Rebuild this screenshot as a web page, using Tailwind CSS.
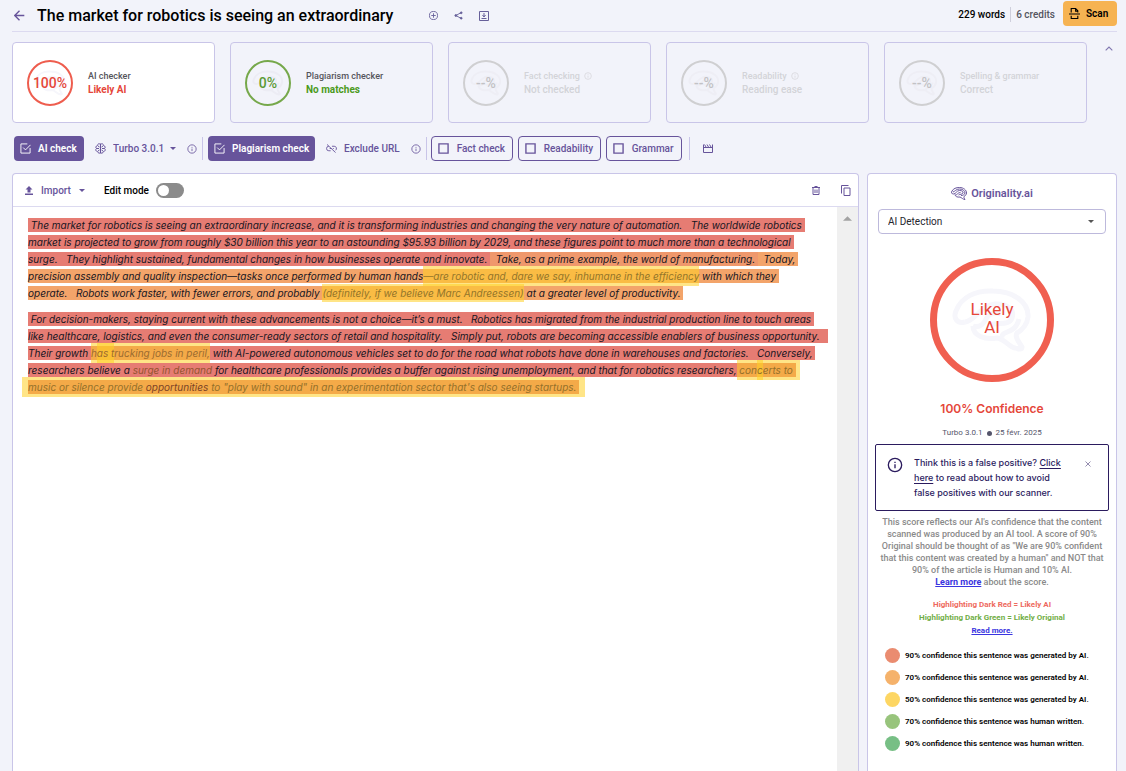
<!DOCTYPE html>
<html lang="en">
  <head>
    <meta charset="UTF-8" />
    <meta name="viewport" content="width=device-width, initial-scale=1.0" />
    <title>Originality.ai - Scan</title>
    <script src="https://cdn.jsdelivr.net/npm/@tailwindcss/browser@4"></script>
  </head>
  <body class="bg-[#f2f3fa] font-['Roboto',sans-serif] text-[10px] leading-[13px] text-black">
    <!-- Shared icons -->
    <svg class="hidden">
      <symbol id="brain" viewBox="0 0 80 66">
        <path d="M13 35C5 37 1 31 4 24C9 10 24 3 41 4C61 4 77 15 76 30C75 38 70 43 65 46C62 50 68 56 70 60C70 63 66 62 63 61C57 60 53 52 45 51C33 53 21 49 21 39" />
        <path d="M13 35C24 34 28 18 43 17C55 16 63 23 60 31C57 39 46 35 39 38M21 39C27 41 31 38 34 32C37 26 43 25 49 27M50 51C49 45 56 46 61 42C65 39 66 36 67 32" />
      </symbol>
      <symbol id="info" viewBox="0 0 24 24">
        <circle cx="12" cy="12" r="10" /><path d="M12 11v6M12 7v2" />
      </symbol>
      <symbol id="box" viewBox="0 0 24 24">
        <path d="M2 2h20v20H2z" />
      </symbol>
      <symbol id="box-checked" viewBox="0 0 24 24">
        <path d="M22 11v11H2V2h14M7 10l5 5L23 4" />
      </symbol>
    </svg>

    <div class="flex min-h-screen flex-col pl-3 pr-[9px]">
      <!-- Header -->
      <header class="flex h-8 items-center border-b border-[#dcdaf0]">
        <a href="#" aria-label="Back" class="mr-3 ml-0.5">
          <svg class="size-[11px] fill-none stroke-[#67549b] stroke-2" viewBox="0 0 16 16"><path d="M15 8H1M8 1L1 8l7 7" /></svg>
        </a>
        <h1 class="text-base leading-5 font-medium">The market for robotics is seeing an extraordinary</h1>
        <div class="ml-9 flex items-center gap-4 text-[#67609a]">
          <button aria-label="Add">
            <svg class="size-[9px] fill-none stroke-current stroke-2" viewBox="0 0 20 20"><circle cx="10" cy="10" r="9" /><path d="M10 5v10M5 10h10" /></svg>
          </button>
          <button aria-label="Share">
            <svg class="size-[9px] fill-current stroke-current stroke-2" viewBox="0 0 20 20"><path class="fill-none" d="M17 3L4 10l13 7" /><circle cx="16" cy="4" r="2" /><circle cx="4" cy="10" r="2" /><circle cx="16" cy="16" r="2" /></svg>
          </button>
          <button aria-label="Download">
            <svg class="size-[10px] fill-none stroke-current stroke-2" viewBox="0 0 20 20"><path d="M1 1h18v18H1zM5 15h10M10 4v7M7 8l3 4 3-4" /></svg>
          </button>
        </div>
        <div class="ml-auto flex h-full items-start">
          <p class="mt-2 font-medium">229 words</p>
          <div class="mx-[5px] mt-[7px] h-[15px] w-px bg-[#cfcfdc]"></div>
          <p class="mt-2 font-medium text-[#55555f]">6 credits</p>
          <button class="mt-px ml-2 flex h-[25px] w-[54px] items-center gap-1.5 rounded bg-[#f6b352] pl-1.5 font-semibold">
            <svg class="size-[11px] fill-none stroke-black stroke-2" viewBox="0 0 20 20"><path d="M4 8V1h8l4 4v3M12 1v5h4M0 11h20M4 14v5h12v-5" /></svg>
            Scan
          </button>
        </div>
      </header>

      <!-- Score cards -->
      <section class="mt-[10px] flex">
        <div class="grid flex-1 grid-cols-5 gap-[15px]">
          <article class="flex h-[81px] items-center gap-[15px] rounded border border-[#c9c5e8] bg-white pl-3.5">
            <div class="relative grid size-[46px] place-items-center rounded-full border-2 border-[#ee5d4e] text-sm font-medium text-[#e5473a]">
              <svg class="absolute h-[26px] w-8 fill-none stroke-[#f6f6fb] stroke-[5]"><use href="#brain" /></svg>
              <span class="relative">100%</span>
            </div>
            <div>
              <h2 class="text-[9px] font-medium text-[#55555c]">AI checker</h2>
              <p class="font-bold text-[#e5473a]">Likely AI</p>
            </div>
          </article>
          <article class="flex h-[81px] items-center gap-[15px] rounded border border-[#c9c5e8] pl-3.5">
            <div class="relative grid size-[46px] place-items-center rounded-full border-2 border-[#76a84b] text-sm font-medium text-[#5b9a35]">
              <svg class="absolute h-[26px] w-8 fill-none stroke-[#ececf4] stroke-[5]"><use href="#brain" /></svg>
              <span class="relative">0%</span>
            </div>
            <div>
              <h2 class="text-[9px] font-medium text-[#55555c]">Plagiarism checker</h2>
              <p class="font-bold text-[#4c9a1b]">No matches</p>
            </div>
          </article>
          <article class="flex h-[81px] items-center gap-[15px] rounded border border-[#c9c5e8] pl-3.5 text-[#d3d3d8]">
            <div class="relative grid size-[46px] place-items-center rounded-full border-2 border-[#cfcfd1] text-sm font-medium text-[#c2c2c5]">
              <svg class="absolute h-[26px] w-8 fill-none stroke-[#eeeef5] stroke-[5]"><use href="#brain" /></svg>
              <span class="relative">--%</span>
            </div>
            <div>
              <h2 class="flex items-center gap-1 text-[9px] font-medium">Fact checking <svg class="size-[8px] fill-none stroke-current stroke-2"><use href="#info" /></svg></h2>
              <p class="font-medium">Not checked</p>
            </div>
          </article>
          <article class="flex h-[81px] items-center gap-[15px] rounded border border-[#c9c5e8] pl-3.5 text-[#d3d3d8]">
            <div class="relative grid size-[46px] place-items-center rounded-full border-2 border-[#cfcfd1] text-sm font-medium text-[#c2c2c5]">
              <svg class="absolute h-[26px] w-8 fill-none stroke-[#eeeef5] stroke-[5]"><use href="#brain" /></svg>
              <span class="relative">--%</span>
            </div>
            <div>
              <h2 class="flex items-center gap-1 text-[9px] font-medium">Readability <svg class="size-[8px] fill-none stroke-current stroke-2"><use href="#info" /></svg></h2>
              <p class="font-medium">Reading ease</p>
            </div>
          </article>
          <article class="flex h-[81px] items-center gap-[15px] rounded border border-[#c9c5e8] pl-3.5 text-[#d3d3d8]">
            <div class="relative grid size-[46px] place-items-center rounded-full border-2 border-[#cfcfd1] text-sm font-medium text-[#c2c2c5]">
              <svg class="absolute h-[26px] w-8 fill-none stroke-[#eeeef5] stroke-[5]"><use href="#brain" /></svg>
              <span class="relative">--%</span>
            </div>
            <div>
              <h2 class="text-[9px] font-medium">Spelling &amp; grammar</h2>
              <p class="font-medium">Correct</p>
            </div>
          </article>
        </div>
        <div class="flex w-[30px] justify-end pt-1 pr-1">
          <button aria-label="Collapse" class="h-[5px]">
            <svg class="block h-[5px] w-2 fill-none stroke-[#8177b0] stroke-2" viewBox="0 0 14 9"><path d="M1 8l6-6 6 6" /></svg>
          </button>
        </div>
      </section>

      <!-- Check options -->
      <section class="mt-[13px] ml-0.5 flex h-[25px] items-center text-[#67549b]">
        <label class="flex h-full w-[70px] items-center gap-[7px] rounded bg-[#67549b] pl-1.5 font-semibold text-white">
          <input type="checkbox" class="sr-only" checked />
          <svg class="size-[11px] fill-none stroke-current stroke-2"><use href="#box-checked" /></svg>
          AI check
        </label>
        <svg class="ml-[11px] size-[11px] fill-none stroke-current stroke-2" viewBox="0 0 22 22"><path d="M11 1v20M11 3C8 0 5 2 5 5C1 6 1 10 3 11C0 13 2 17 5 17C6 21 10 21 11 19M11 3C14 0 17 2 17 5C21 6 21 10 19 11C22 13 20 17 17 17C16 21 12 21 11 19M3 11h5M19 11h-5M6 6l3 2M16 6l-3 2M6 16l3-2M16 16l-3-2" /></svg>
        <label class="relative ml-[7px] flex h-full w-[63px] items-center">
          <select aria-label="Model" class="w-full appearance-none bg-transparent font-medium">
            <option>Turbo 3.0.1</option>
          </select>
          <svg class="pointer-events-none absolute right-0 h-[3px] w-[6px] fill-current" viewBox="0 0 8 4"><path d="M0 0h8L4 4z" /></svg>
        </label>
        <svg class="ml-[11px] size-[10px] fill-none stroke-current stroke-2"><use href="#info" /></svg>
        <div class="mx-[5px] h-[23px] w-px bg-[#c9c5e8]"></div>
        <label class="flex h-full w-[107px] items-center gap-[7px] rounded bg-[#67549b] pl-1.5 font-semibold text-white">
          <input type="checkbox" class="sr-only" checked />
          <svg class="size-[11px] fill-none stroke-current stroke-2"><use href="#box-checked" /></svg>
          Plagiarism check
        </label>
        <button class="ml-[11px] flex items-center gap-[7px] font-medium">
          <svg class="h-[9px] w-[11px] fill-none stroke-current stroke-2" viewBox="0 0 24 20"><path d="M2 1l19 18M6 5a5 5 0 0 0 0 10h4M13 5h5a5 5 0 0 1 3 9M8 10h4M15 10h2" /></svg>
          Exclude URL
        </button>
        <svg class="ml-[11px] size-[10px] fill-none stroke-current stroke-2"><use href="#info" /></svg>
        <div class="mr-1 ml-[5px] h-[23px] w-px bg-[#c9c5e8]"></div>
        <div class="flex h-full gap-[5px] font-medium">
          <label class="flex w-[82px] items-center gap-2 rounded border border-[#67549b] pl-1.5">
            <input type="checkbox" class="sr-only" />
            <svg class="size-[11px] fill-none stroke-current stroke-3"><use href="#box" /></svg>
            Fact check
          </label>
          <label class="flex w-[83px] items-center gap-2 rounded border border-[#67549b] pl-1.5">
            <input type="checkbox" class="sr-only" />
            <svg class="size-[11px] fill-none stroke-current stroke-3"><use href="#box" /></svg>
            Readability
          </label>
          <label class="flex w-[76px] items-center gap-2 rounded border border-[#67549b] pl-1.5">
            <input type="checkbox" class="sr-only" />
            <svg class="size-[11px] fill-none stroke-current stroke-3"><use href="#box" /></svg>
            Grammar
          </label>
        </div>
        <div class="ml-[7px] h-[23px] w-px bg-[#c9c5e8]"></div>
        <button aria-label="Video" class="ml-[13px]">
          <svg class="h-[9px] w-[10px] fill-none stroke-current stroke-2" viewBox="0 0 20 18"><path d="M1 1v16h18V1M1 7h18M3 1l3 5M8 1l3 5M13 1l3 5" /></svg>
        </button>
      </section>

      <main class="mt-3 flex flex-1 gap-2">
        <!-- Editor -->
        <section class="flex flex-1 flex-col rounded-t border border-b-0 border-[#c9c5e8] bg-white">
          <div class="flex h-[33px] items-center border-b border-[#dcdaf0] pr-[7px] pl-3 text-[#67549b]">
            <button class="flex items-center gap-2 font-medium">
              <svg class="h-[9px] w-2 fill-current" viewBox="0 0 16 18"><path d="M8 0l7 7h-4v6H5V7H1zM0 15h16v3H0z" /></svg>
              Import
              <svg class="h-[3px] w-[6px] fill-current" viewBox="0 0 8 4"><path d="M0 0h8L4 4z" /></svg>
            </button>
            <label class="ml-[19px] flex items-center gap-[7px] font-medium text-black">
              Edit mode
              <input type="checkbox" role="switch" class="peer sr-only" />
              <span class="flex h-[15px] w-7 items-center rounded-full bg-[#8b8b8b] pl-0.5 peer-checked:bg-[#67549b]">
                <span class="size-[11px] rounded-full bg-white"></span>
              </span>
            </label>
            <button aria-label="Delete" class="ml-auto">
              <svg class="h-[9px] w-2 fill-none stroke-current stroke-2" viewBox="0 0 16 18"><path d="M0 3h16M5 1h6M2 3v14h12V3M6 7v7M10 7v7" /></svg>
            </button>
            <button aria-label="Copy" class="ml-[21px]">
              <svg class="h-[11px] w-[10px] fill-none stroke-current stroke-2" viewBox="0 0 20 22"><path d="M6 6h12v15H6zM1 17V1h14" /></svg>
            </button>
          </div>
          <div class="flex flex-1">
            <div class="flex flex-1 flex-col gap-[9px] pt-[10px] pl-[15px] font-['Inter',sans-serif] text-[10px] leading-[17px] text-[#15151f] italic">
              <p>
                <span class="bg-[#e67c73] py-px">&nbsp;The market for robotics is seeing an extraordinary increase, and it is transforming industries and changing the very nature of automation.&nbsp; &nbsp;The worldwide robotics&nbsp;<br />market is projected to grow from roughly $30 billion this year to an astounding $95.93 billion by 2029, and these figures point to much more than a technological&nbsp;<br />surge.&nbsp; &nbsp;They highlight sustained, fundamental changes in how businesses operate and innovate.&nbsp;</span><span class="bg-[#ef986c] py-px">&nbsp; Take, as a prime example, the world of manufacturing.&nbsp;</span><span class="bg-[#f3a46a] py-px">&nbsp; Today,&nbsp;<br />precision assembly and quality inspection—tasks once performed by human hands<mark class="bg-[#ffd025]/55 py-1 text-[#93752a]">—are robotic and, dare we say, inhumane in the efficiency</mark> with which they&nbsp;<br />operate.&nbsp; &nbsp;Robots work faster, with fewer errors, and probably <mark class="bg-[#ffd025]/55 py-[3px] text-[#93752a]">(definitely, if we believe Marc Andreessen)</mark> at a greater level of productivity.&nbsp;</span>
              </p>
              <p>
                <span class="bg-[#e67c73] py-px">&nbsp;For decision-makers, staying current with these advancements is not a choice—it’s a must.&nbsp; &nbsp;Robotics has migrated from the industrial production line to touch areas&nbsp;<br />like healthcare, logistics, and even the consumer-ready sectors of retail and hospitality.&nbsp; &nbsp;Simply put, robots are becoming accessible enablers of business opportunity.&nbsp; &nbsp;<br />Their growth <mark class="bg-[#ffd025]/55 py-1 text-[#9a6a30]">h<span class="bg-[#ffd025]/55 py-1">as t</span>rucking jobs in peril,</mark> with AI-powered autonomous vehicles set to do for the road what robots have done in warehouses and factories.&nbsp; &nbsp;Conversely,&nbsp;<br />researchers believe a <mark class="bg-transparent text-[#93552f]">surge in demand</mark> for healthcare professionals provides a buffer against rising unemployment, and that for robotics researchers,<mark class="-mr-1 bg-[#ffd025]/55 py-1 pr-1 text-[#93702a]">&nbsp;con<span class="bg-[#ffd025]/55 py-1">c</span>erts to&nbsp;</mark><br /><mark class="-mx-1.5 bg-[#ffd025]/55 px-1.5 py-1 text-[#93702a]">music or silence provide <span class="text-[#7a4226]">opportunities</span> to "play with sound" in an experimentation sector that's also seeing startups.&nbsp;</mark></span>
              </p>
            </div>
            <!-- Scroll track -->
            <div class="flex w-[21px] justify-center bg-[#f0f0f0] pt-[9px]">
              <svg class="h-[5px] w-[9px] fill-[#a3a3a3]" viewBox="0 0 10 5"><path d="M5 0l5 5H0z" /></svg>
            </div>
          </div>
        </section>

        <!-- Result panel -->
        <aside class="flex w-[250px] flex-col rounded-t border border-b-0 border-[#c9c5e8] bg-white px-[7px] pt-3">
          <div class="flex items-center justify-center gap-1 text-[11px] leading-[15px] font-semibold text-[#67549b]">
            <svg class="h-[13px] w-4 fill-none stroke-current stroke-2" viewBox="0 0 32 26"><path d="M5 14C1 14 0 11 2 8C5 3 10 1 17 1C25 1 31 6 31 12C31 15 28 18 26 19C25 21 27 23 28 25C24 25 21 21 18 20C13 21 8 19 8 15M5 14C10 14 11 7 17 7C22 7 25 9 24 12C23 15 18 14 15 16M4 10C8 9 10 4 17 4C24 4 28 8 28 12C27 16 23 17 20 17M9 16C13 16 13 11 19 11" /></svg>
            Originality.ai
          </div>
          <label class="relative mx-[3px] mt-2 block">
            <select aria-label="Result type" class="h-[25px] w-full appearance-none rounded border border-[#bdb9dc] bg-white pl-[9px] text-[#26262e]">
              <option>AI Detection</option>
            </select>
            <svg class="pointer-events-none absolute top-[11px] right-3 h-[3px] w-[6px] fill-[#555]" viewBox="0 0 8 4"><path d="M0 0h8L4 4z" /></svg>
          </label>
          <div class="relative mx-auto mt-6 grid size-[124px] place-items-center rounded-full border-[7px] border-[#f05f50] text-center text-[17px] leading-[18px] text-[#e5473a]">
            <svg class="absolute h-[66px] w-20 fill-none stroke-[#f6f6fb] stroke-[5]"><use href="#brain" /></svg>
            <p class="relative -mt-1">Likely<br />AI</p>
          </div>
          <p class="mt-[18px] text-center font-['Inter',sans-serif] text-xs leading-[18px] font-semibold text-[#e5473a]">100% Confidence</p>
          <div class="mt-[9px] flex items-center justify-center gap-1 text-[8px] leading-3 text-[#55556b]">
            Turbo 3.0.1 <span class="size-[5px] rounded-full bg-[#55556b]"></span> 25 févr. 2025
          </div>
          <div class="mt-[5px] flex rounded-xs border border-[#2b1b5e] pt-[10px] pr-[17px] pb-[10px] pl-[11px] text-[#2b1b5e]">
            <svg class="mt-[2px] size-4 shrink-0 fill-none stroke-current stroke-2"><use href="#info" /></svg>
            <p class="ml-[11px] font-['Inter',sans-serif] text-[9px] leading-[15px] font-medium">Think this is a false positive? <a href="#" class="underline underline-offset-2">Click<br />here</a> to read about how to avoid<br />false positives with our scanner.</p>
            <button aria-label="Close" class="mt-[6px] ml-auto h-[6px]">
              <svg class="size-[6px] fill-none stroke-current stroke-1" viewBox="0 0 12 12"><path d="M1 1l10 10M11 1L1 11" /></svg>
            </button>
          </div>
          <p class="mt-[5px] text-center text-[9px] leading-[12px] font-medium whitespace-nowrap text-[#8a8a8a]">
            This score reflects our AI's confidence that the content<br />scanned was produced by an AI tool. A score of 90%<br />Original should be thought of as "We are 90% confident<br />that this content was created by a human" and NOT that<br />90% of the article is Human and 10% AI.<br /><a href="#" class="font-bold text-[#3a35e0] underline">Learn more</a> about the score.
          </p>
          <p class="mt-2.5 text-center text-[8px] leading-[13px] font-bold text-[#ee6a5e]">
            Highlighting Dark Red = Likely AI<br /><span class="text-[#71ae46]">Highlighting Dark Green = Likely Original</span><br /><a href="#" class="text-[#3a35e0] underline">Read more.</a>
          </p>
          <ul class="mt-[11px] ml-[10px] flex flex-col gap-[7px] text-[8px] leading-[15px] font-semibold">
            <li class="flex gap-[5px]"><span class="size-[15px] rounded-full bg-[#ea8c70]"></span>90% confidence this sentence was generated by AI.</li>
            <li class="flex gap-[5px]"><span class="size-[15px] rounded-full bg-[#f5b26b]"></span>70% confidence this sentence was generated by AI.</li>
            <li class="flex gap-[5px]"><span class="size-[15px] rounded-full bg-[#fdd663]"></span>50% confidence this sentence was generated by AI.</li>
            <li class="flex gap-[5px]"><span class="size-[15px] rounded-full bg-[#98c47c]"></span>70% confidence this sentence was human written.</li>
            <li class="flex gap-[5px]"><span class="size-[15px] rounded-full bg-[#77bf85]"></span>90% confidence this sentence was human written.</li>
          </ul>
        </aside>
      </main>
    </div>
  </body>
</html>
